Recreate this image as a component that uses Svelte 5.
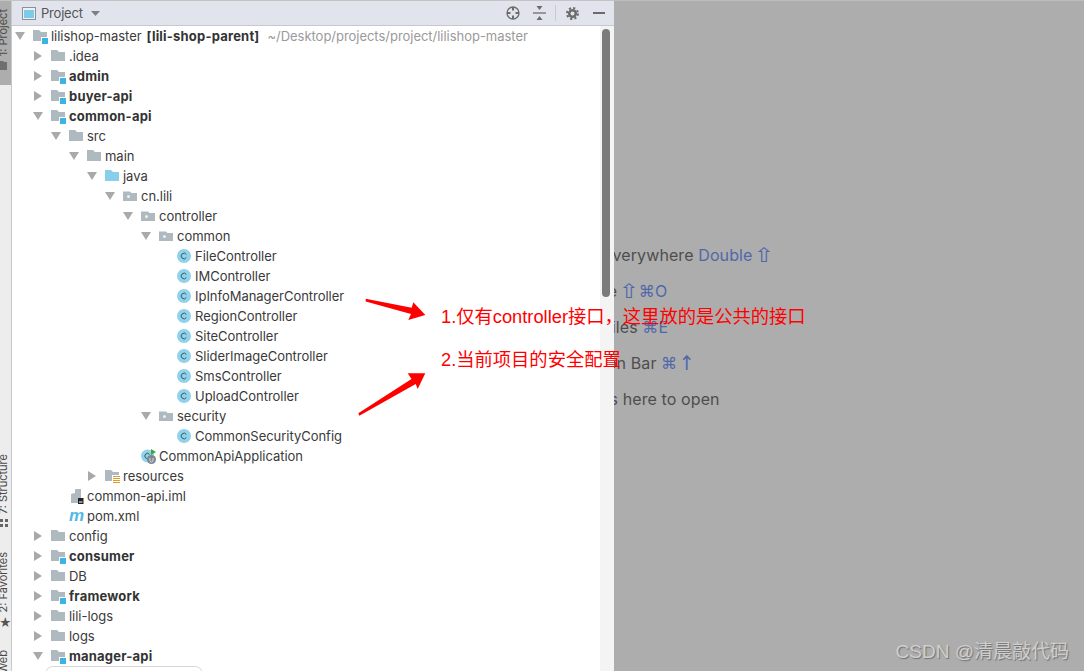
<script lang="ts">
	type Row = { name: string; level: number; icon: string; arrow?: 'open' | 'closed'; bold?: boolean; suffix?: string; hint?: string };

	const rows: Row[] = [
		{ name: 'lilishop-master', level: 0, icon: 'module', arrow: 'open', suffix: '[lili-shop-parent]', hint: '~/Desktop/projects/project/lilishop-master' },
		{ name: '.idea', level: 1, icon: 'folder', arrow: 'closed' },
		{ name: 'admin', level: 1, icon: 'module', arrow: 'closed', bold: true },
		{ name: 'buyer-api', level: 1, icon: 'module', arrow: 'closed', bold: true },
		{ name: 'common-api', level: 1, icon: 'module', arrow: 'open', bold: true },
		{ name: 'src', level: 2, icon: 'folder', arrow: 'open' },
		{ name: 'main', level: 3, icon: 'folder', arrow: 'open' },
		{ name: 'java', level: 4, icon: 'java', arrow: 'open' },
		{ name: 'cn.lili', level: 5, icon: 'package', arrow: 'open' },
		{ name: 'controller', level: 6, icon: 'package', arrow: 'open' },
		{ name: 'common', level: 7, icon: 'package', arrow: 'open' },
		{ name: 'FileController', level: 8, icon: 'class' },
		{ name: 'IMController', level: 8, icon: 'class' },
		{ name: 'IpInfoManagerController', level: 8, icon: 'class' },
		{ name: 'RegionController', level: 8, icon: 'class' },
		{ name: 'SiteController', level: 8, icon: 'class' },
		{ name: 'SliderImageController', level: 8, icon: 'class' },
		{ name: 'SmsController', level: 8, icon: 'class' },
		{ name: 'UploadController', level: 8, icon: 'class' },
		{ name: 'security', level: 7, icon: 'package', arrow: 'open' },
		{ name: 'CommonSecurityConfig', level: 8, icon: 'class' },
		{ name: 'CommonApiApplication', level: 6, icon: 'app' },
		{ name: 'resources', level: 4, icon: 'resources', arrow: 'closed' },
		{ name: 'common-api.iml', level: 2, icon: 'iml' },
		{ name: 'pom.xml', level: 2, icon: 'maven' },
		{ name: 'config', level: 1, icon: 'folder', arrow: 'closed' },
		{ name: 'consumer', level: 1, icon: 'module', arrow: 'closed', bold: true },
		{ name: 'DB', level: 1, icon: 'folder', arrow: 'closed' },
		{ name: 'framework', level: 1, icon: 'module', arrow: 'closed', bold: true },
		{ name: 'lili-logs', level: 1, icon: 'folder', arrow: 'closed' },
		{ name: 'logs', level: 1, icon: 'folder', arrow: 'closed' },
		{ name: 'manager-api', level: 1, icon: 'module', arrow: 'open', bold: true }
	];

	const folderPath = 'M0 2h6l2 2h6v9H0z';
	const packagePath = 'M0 3.500h7L8.500 5H14v8H0z';
</script>

<div class="window">
	<aside class="strip">
		<div class="tab active">
			<span class="vert">1: Project</span>
			<svg class="tab-icon" width="7" height="9" viewBox="0 0 7 9"><path d="M0 0h3l1 1h3v8H0z" fill="#6e6e6e" /></svg>
		</div>
		<div class="tab structure">
			<span class="vert">7: Structure</span>
			<svg class="tab-icon" width="8" height="8" viewBox="0 0 8 8"><path d="M0 0h3v3H0zM5 0h3v3H5zM0 5h3v3H0zM5 5h3v3H5z" fill="#666" /></svg>
		</div>
		<div class="tab favorites">
			<span class="vert">2: Favorites</span>
			<span class="star">★</span>
		</div>
		<div class="tab web">
			<span class="vert">Web</span>
		</div>
	</aside>

	<section class="project">
		<header class="bar">
			<svg class="bar-icon" width="14" height="13" viewBox="0 0 14 13">
				<rect x="0.5" y="0.5" width="13" height="12" fill="#eef0f4" stroke="#8b9199" />
				<rect x="2" y="3" width="10" height="8" fill="#7ccbe8" />
			</svg>
			<span class="bar-title">Project</span>
			<svg class="caret" width="9" height="5" viewBox="0 0 9 5"><path d="M0 0h9L4.500 5z" fill="#7b7f86" /></svg>
			<div class="tools">
				<svg width="14" height="14" viewBox="0 0 14 14" fill="none" stroke="#6c6c6c" stroke-width="1.300">
					<circle cx="7" cy="7" r="6" />
					<path d="M7 1v3.500M7 9.500V13M1 7h3.500M9.500 7H13" stroke-width="2" />
				</svg>
				<svg class="collapse" width="13" height="14" viewBox="0 0 13 14">
					<path d="M3.500 0h6L6.500 4zM3.500 14h6l-3-4z" fill="#6c6c6c" />
					<path d="M0 7h13" stroke="#6c6c6c" stroke-width="1.300" />
				</svg>
				<span class="sep"></span>
				<svg class="gear" width="13" height="13" viewBox="0 0 13 13" fill="none" stroke="#6c6c6c">
					<circle cx="6.500" cy="6.500" r="5.500" stroke-width="2" stroke-dasharray="2.160 2.160" />
					<circle cx="6.500" cy="6.500" r="3.300" stroke-width="2.600" />
				</svg>
				<span class="minimize"></span>
			</div>
		</header>

		<div class="tree">
			<div class="rows">
				{#each rows as row}
					<div class="row" style="padding-left: {row.level * 18}px">
						<span class="arrow">
							{#if row.arrow === 'open'}
								<svg class="open" width="10" height="8" viewBox="0 0 10 8"><path d="M0 0h10L5 8z" fill="#a9a9a9" /></svg>
							{:else if row.arrow === 'closed'}
								<svg class="closed" width="8" height="10" viewBox="0 0 8 10"><path d="M0 0l8 5L0 10z" fill="#a9a9a9" /></svg>
							{/if}
						</span>
						<svg class="icon" width="16" height="16" viewBox="0 0 16 16">
							{#if row.icon === 'folder'}
								<path d={folderPath} fill="#aeb9c0" />
							{:else if row.icon === 'java'}
								<path d={folderPath} fill="#88cfea" />
							{:else if row.icon === 'module'}
								<path d={folderPath} fill="#aeb9c0" />
								<rect x="8" y="9" width="7" height="7" fill="#fff" />
								<rect x="9" y="10" width="6" height="6" fill="#3db3e3" />
							{:else if row.icon === 'package'}
								<path d={packagePath} fill="#aeb9c0" />
								<circle cx="5.500" cy="8.500" r="1.500" fill="#eef1f3" />
							{:else if row.icon === 'resources'}
								<path d={folderPath} fill="#aeb9c0" />
								<rect x="7" y="7" width="9" height="9" fill="#fff" />
								<path d="M8 8.500h7M8 10.500h7M8 12.500h7M8 14.500h7" stroke="#dd9d2d" stroke-width="1" />
							{:else if row.icon === 'class'}
								<circle cx="7" cy="8" r="7" fill="#8fd2ec" />
								<path d="M9.300 6.400a2.800 2.800 0 1 0 0 3.200" fill="none" stroke="#3f5560" stroke-width="1" />
							{:else if row.icon === 'app'}
								<circle cx="6.500" cy="8" r="6.500" fill="#8fd2ec" />
								<path d="M8.500 6.400a2.600 2.600 0 1 0 0 3.200" fill="none" stroke="#3f5560" stroke-width="1" />
								<path d="M10 1l5 3L10 7z" fill="#3fa63f" />
								<circle cx="10.500" cy="11.500" r="4.500" fill="#7d8790" />
								<path d="M9 10v2.500a1.500 1.500 0 0 0 3 0V10" fill="none" stroke="#e8e8e8" stroke-width=".9" />
							{:else if row.icon === 'iml'}
								<path d="M2 6l4-1V1.500L7 1h5v9H9v5H2z" fill="#aeb9c0" />
								<rect x="9" y="10" width="5.500" height="6" fill="#222" />
								<rect x="10" y="13.500" width="3.500" height="1" fill="#fff" />
							{:else if row.icon === 'maven'}
								<text x="0" y="13" class="maven">m</text>
							{/if}
						</svg>
						<span class="name" class:bold={row.bold}>{row.name}</span>
						{#if row.suffix}<span class="suffix">{row.suffix}</span>{/if}
						{#if row.hint}<span class="hint">{row.hint}</span>{/if}
					</div>
				{/each}
			</div>
			<div class="track"><div class="thumb"></div></div>
		</div>
		<div class="popup"></div>
	</section>

	<main class="editor">
		<div class="hints">
			<p>Search Everywhere <b>Double <i class="up">⇧</i></b></p>
			<p>Go to File <b><i class="up">⇧</i><i>⌘</i>O</b></p>
			<p>Recent Files <b><i>⌘</i>E</b></p>
			<p>Navigation Bar <b><i>⌘</i><i class="arrow-up">↑</i></b></p>
			<p>Drop files here to open</p>
		</div>
		<span class="watermark">CSDN @清晨敲代码</span>
	</main>

	<!-- annotations drawn on top of the screenshot -->
	<svg class="marks" width="1084" height="671" viewBox="0 0 1084 671">
		<path d="M365.700 298.800L411.700 307.700 413.300 302.300 425.300 315 408.300 320 411 314 365.700 301.500z" fill="#ff0000" />
		<path d="M358.300 413.300L411.500 379 407.700 373.300 425.300 373.300 417.700 389 415.700 384 359.300 415.700z" fill="#ff0000" />
	</svg>
	<div class="note first">1.仅有controller接口，这里放的是公共的接口</div>
	<div class="note second">2.当前项目的安全配置</div>
</div>

<style>
	:global(body) {
		margin: 0;
		overflow: hidden;
	}

	.window {
		position: relative;
		display: flex;
		width: 1084px;
		height: 671px;
		overflow: hidden;
		font-family: Inter, 'Noto Sans', sans-serif;
		font-size: 13px;
		color: #3a3a3a;
	}

	.strip {
		flex: 0 0 11px;
		display: flex;
		flex-direction: column;
		background: #ededed;
		border-right: 1px solid #c9c9c9;
		border-top: 1px solid #c4c4c4;
		overflow: hidden;
		font-size: 11px;
		color: #4a4a4a;
	}

	.tab {
		display: flex;
		flex-direction: column;
		align-items: flex-start;
		flex: none;
	}

	.tab.active {
		height: 84px;
		background: #adadad;
	}

	.vert {
		writing-mode: vertical-rl;
		transform: rotate(180deg);
		line-height: 7px;
		white-space: nowrap;
		flex: none;
	}

	.tab-icon {
		flex: none;
		margin-top: 5px;
	}

	.tab.active .vert {
		margin-top: 8px;
	}

	.tab.structure {
		margin-top: 369px;
	}

	.tab.favorites {
		margin-top: 25px;
	}

	.star {
		font-size: 12px;
		line-height: 12px;
		margin-top: 4px;
		margin-left: -1px;
		color: #555;
	}

	.tab.web {
		margin-top: 21px;
	}

	.project {
		position: relative;
		flex: 0 0 602px;
		display: flex;
		flex-direction: column;
		background: #fff;
		z-index: 1;
	}

	.bar {
		flex: 0 0 26px;
		display: flex;
		align-items: center;
		box-sizing: border-box;
		background: #e1e4ec;
		border-top: 1px solid #c4c4c4;
		border-bottom: 1px solid #c6c8ce;
		padding-left: 10px;
		padding-right: 9px;
		color: #555;
	}

	.bar-title {
		margin-left: 5px;
		letter-spacing: -0.2px;
	}

	.caret {
		margin-left: 8px;
	}

	.tools {
		margin-left: auto;
		display: flex;
		align-items: center;
	}

	.collapse {
		margin-left: 13px;
	}

	.sep {
		width: 1px;
		height: 16px;
		background: #c8cad0;
		margin-left: 9px;
	}

	.gear {
		margin-left: 10px;
	}

	.minimize {
		width: 12px;
		height: 2px;
		background: #6c6c6c;
		margin-left: 14px;
	}

	.tree {
		flex: 1;
		display: flex;
		min-height: 0;
	}

	.rows {
		flex: 1;
		overflow: hidden;
	}

	.row {
		display: flex;
		align-items: center;
		height: 20px;
		white-space: nowrap;
		letter-spacing: -0.03px;
	}

	.arrow {
		flex: 0 0 21px;
		display: flex;
	}

	.arrow .open {
		margin-left: 3px;
	}

	.arrow .closed {
		margin-left: 4px;
	}

	.icon {
		flex: none;
		margin-right: 2px;
	}

	.maven {
		font-family: 'Liberation Sans', sans-serif;
		font-style: italic;
		font-weight: 700;
		font-size: 17px;
		fill: #4fb9e6;
	}

	.name.bold,
	.suffix {
		font-weight: 700;
		color: #333;
		letter-spacing: 0.2px;
	}

	.suffix {
		margin-left: 5px;
	}

	.hint {
		margin-left: 8px;
		color: #9a9a9a;
	}

	.track {
		flex: 0 0 14px;
		background: #f4f4f4;
	}

	.thumb {
		width: 8px;
		height: 268px;
		margin: 3px 0 0 2px;
		background: #7b7b7b;
		border-radius: 4px;
	}

	.popup {
		position: absolute;
		left: 33px;
		top: 666px;
		width: 156px;
		height: 20px;
		background: #fff;
		border: 1px solid #d8d8d8;
		border-radius: 8px;
	}

	.editor {
		position: relative;
		flex: 1;
		overflow: hidden;
		background: #adadad;
		border-top: 1px solid #bdbdbd;
		font-size: 16px;
		color: #4d4d4d;
	}

	.hints {
		margin: 243px 0 0 -69.500px;
		white-space: nowrap;
		letter-spacing: 0.1px;
	}

	.hints p {
		margin: 0 0 14px;
		height: 22px;
		line-height: 22px;
	}

	.hints b {
		font-weight: 400;
		color: #5068aa;
	}

	.hints i {
		font-style: normal;
		font-family: 'DejaVu Sans', sans-serif;
		font-size: 16px;
		line-height: 0;
	}

	.hints i.up {
		display: inline-block;
		font-size: 16px;
		width: 14px;
		margin-right: 3px;
		text-align: center;
		transform: scale(1.5, 1.25);
	}

	.hints i.arrow-up {
		margin-left: 3px;
		display: inline-block;
		transform: scale(1.2, 1.25);
	}

	.watermark {
		position: absolute;
		right: 15px;
		top: 639px;
		font-family: 'Liberation Sans', 'Noto Sans CJK SC', sans-serif;
		font-size: 19px;
		line-height: 24px;
		color: #cfcfcf;
		text-shadow: 1px 1px 1px #707070;
		white-space: nowrap;
	}

	.marks {
		position: absolute;
		left: 0;
		top: 0;
		z-index: 2;
		pointer-events: none;
	}

	.note {
		position: absolute;
		left: 441px;
		z-index: 3;
		font-family: 'Liberation Sans', 'Noto Sans CJK SC', sans-serif;
		font-size: 18.3px;
		line-height: 24px;
		color: #ff0000;
		white-space: nowrap;
	}

	.note.first {
		top: 305px;
	}

	.note.second {
		top: 348px;
	}
</style>
